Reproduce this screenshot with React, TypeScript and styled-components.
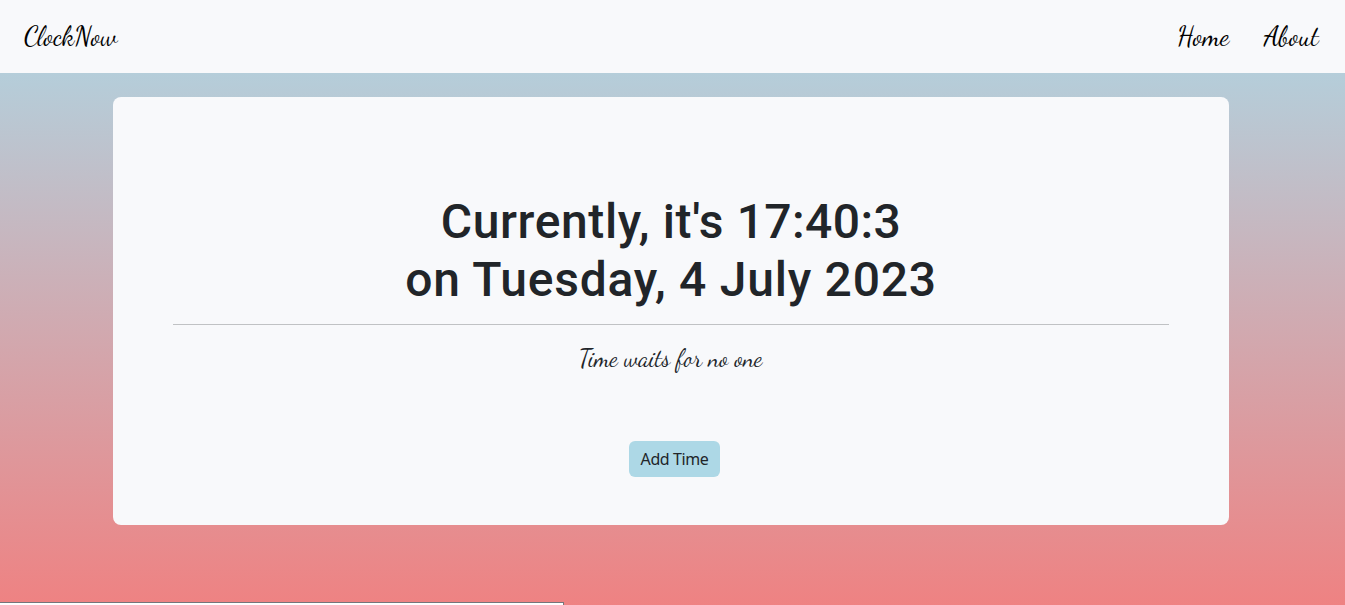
import React from "react";
import styled, { createGlobalStyle } from "styled-components";

const GlobalStyle = createGlobalStyle`
  *, *::before, *::after { box-sizing: border-box; }
  body {
    margin: 0;
    color: #212529;
    font: 400 16px/1.5 "Noto Sans", "Liberation Sans", sans-serif;
  }
`;

const Page = styled.div`
  height: 605px;
  overflow: hidden;
  display: flex;
  flex-direction: column;
  background: linear-gradient(to bottom, lightblue, lightcoral 618px);
`;

const Navbar = styled.nav`
  flex: none;
  height: 73px;
  padding: 0 25px 0 24px;
  display: flex;
  align-items: center;
  justify-content: space-between;
  background: #f8f9fb;
`;

const NavLinks = styled.div`
  display: flex;
  gap: 35px;
`;

const NavLink = styled.a<{ $width: number }>`
  width: ${(p) => p.$width}px;
  color: #000;
  font: 400 27px/36px "Dancing Script", cursive;
  white-space: nowrap;
  text-decoration: none;
`;

const Card = styled.main`
  flex: none;
  width: 1116px;
  height: 428px;
  margin: 24px 0 0 113px;
  padding: 96px 60px 48px;
  display: flex;
  flex-direction: column;
  align-items: center;
  border-radius: 8px;
  background: #f8f9fb;
`;

const Heading = styled.h1`
  margin: 0;
  font: 500 48px/58px Roboto, sans-serif;
  letter-spacing: 0.75px;
  text-align: center;
`;

const HeadingPart = styled.span<{ $spacing: number }>`
  letter-spacing: ${(p) => p.$spacing}px;
`;

const Divider = styled.hr`
  width: 100%;
  margin: 15px 0 16px;
  border: 0;
  border-top: 1px solid #c0c2c4;
`;

const Quote = styled.p`
  margin: 0 1px 0 0;
  font: 400 24px/36px "Dancing Script", cursive;
`;

const AddButton = styled.button`
  width: 91px;
  height: 36px;
  margin: auto 0 0 7px;
  padding: 0;
  border: 0;
  border-radius: 6px;
  color: #212529;
  background: lightblue;
  font: 400 16px/24px "Noto Sans", sans-serif;
  letter-spacing: -0.4px;
`;

const StatusBar = styled.div`
  width: 564px;
  height: 3px;
  margin-top: auto;
  border: solid #75757b;
  border-width: 1px 1px 0 0;
  background: #fff;
`;

export default function App() {
  return (
    <>
      <GlobalStyle />
      <Page>
        <Navbar>
          <NavLink $width={94}>ClockNow</NavLink>
          <NavLinks>
            <NavLink $width={52}>Home</NavLink>
            <NavLink $width={56}>About</NavLink>
          </NavLinks>
        </Navbar>
        <Card>
          <Heading>
            <HeadingPart $spacing={0.6}>Currently, it's </HeadingPart>
            <HeadingPart $spacing={0.4}>17:40:3</HeadingPart>
            <br />
            on Tuesday, 4 July 2023
          </Heading>
          <Divider />
          <Quote>Time waits for no one</Quote>
          <AddButton>Add Time</AddButton>
        </Card>
        <StatusBar />
      </Page>
    </>
  );
}
